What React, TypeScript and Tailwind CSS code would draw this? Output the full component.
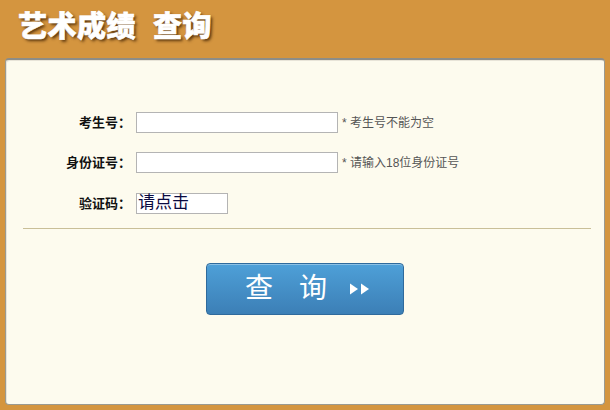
const FONT = "font-['Liberation_Sans','Noto_Sans_CJK_SC',sans-serif]"

const ROWS = [
  { label: '考生号：', hint: '* 考生号不能为空' },
  { label: '身份证号：', hint: '* 请输入18位身份证号' },
] as const

export default function App() {
  return (
    <div className={`w-[610px] h-[410px] bg-[#d4953f] flex flex-col ${FONT}`}>
      {/* Title */}
      <div className="h-[58px] pl-[18px] pt-[9px]">
        <h1 className="text-[29px] leading-[36px] font-black text-white tracking-[0.5px] [-webkit-text-stroke:0.6px_white] [text-shadow:2px_2px_3px_rgba(60,30,0,0.8)]">
          艺术成绩&nbsp;&nbsp;查询
        </h1>
      </div>

      {/* Panel */}
      <div className="mx-[5px] mb-[5px] flex-1 bg-[#fdfbee] rounded-[4px] border border-[#9a9a90] border-t-2 border-t-[#8d8d88] shadow-[inset_1px_1px_0_#e8e4d8]">
        <div className="pt-[52px] flex flex-col gap-[19px]">
          {ROWS.map(({ label, hint }) => (
            <div key={label} className="flex items-center h-[21px]">
              <label className="w-[125px] text-right text-[13px] font-bold text-[#111]">{label}</label>
              <input
                type="text"
                className="ml-[5px] w-[202px] h-[21px] bg-white border border-[#b4b4b4] outline-none"
              />
              <span className="ml-[4px] text-[12px] text-[#555]">{hint}</span>
            </div>
          ))}
          <div className="flex items-center h-[21px] mt-[1px]">
            <label className="w-[125px] text-right text-[13px] font-bold text-[#111]">验证码：</label>
            <div className="ml-[5px] w-[92px] h-[21px] bg-white border border-[#b4b4b4] text-[17px] leading-[18px] text-[#0a0a40] pl-[1px]">
              请点击
            </div>
          </div>
        </div>

        <div className="mt-[14px] ml-[17px] mr-[13px] h-px bg-[#c9bf98]" />

        <div className="flex justify-center pt-[34px]">
          <button className="w-[198px] h-[52px] rounded-[4px] border border-[#2f6a9c] bg-gradient-to-b from-[#4ea0d8] to-[#3c7fb6] shadow-[inset_0_1px_0_rgba(255,255,255,0.35)] flex items-center justify-center text-white text-[28px] pl-[6px]">
            <span>查</span>
            <span className="ml-[26px]">询</span>
            <svg width="22" height="12" viewBox="0 0 22 12" className="ml-[22px]" fill="white">
              <polygon points="1,0.5 9,6 1,11.5" />
              <polygon points="12,0.5 20,6 12,11.5" />
            </svg>
          </button>
        </div>
      </div>
    </div>
  )
}
